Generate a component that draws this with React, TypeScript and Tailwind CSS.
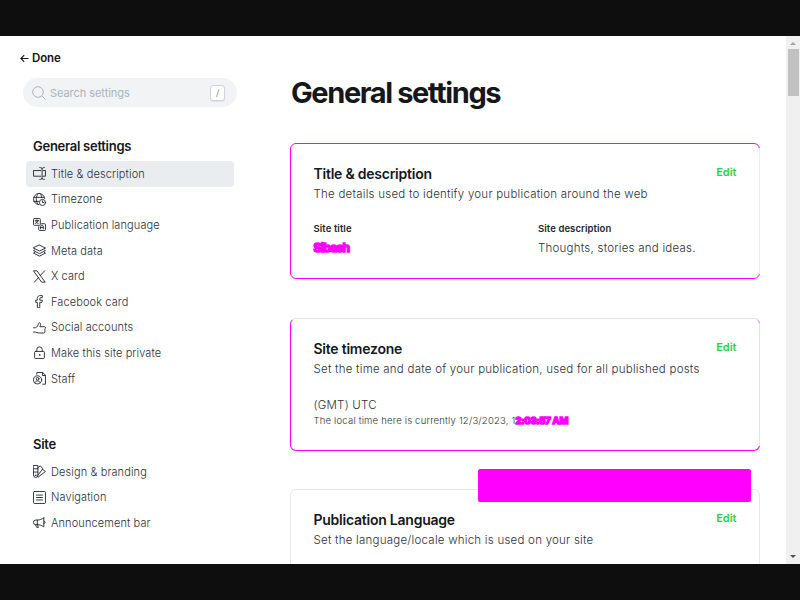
import type { ReactNode } from "react";

type IconName =
  | "title" | "timezone" | "language" | "layers" | "x" | "facebook"
  | "thumb" | "lock" | "staff" | "palette" | "nav" | "megaphone";

const drawings: Record<IconName, ReactNode> = {
  title: (
    <>
      <path d="M14.500 6.500H1v10.500h13.500M19 6.500h4v10.500h-4" />
      <path d="M16.800 3v18M12.500 1c2.500 0 4.300.8 4.300 2.500C16.800 1.800 18.500 1 21 1M12.500 23c2.500 0 4.300-.8 4.300-2.500 0 1.700 1.700 2.500 4.200 2.500" />
    </>
  ),
  timezone: (
    <>
      <path d="M11 21.500A10.300 10.300 0 1 1 21.500 10M1.500 8h19M1.500 15.500h9M9 21C4.500 14 5 6 10 1M13 1c2 2.500 3 5 3.300 8" />
      <circle cx="17.500" cy="17.500" r="5.700" />
      <path d="M17.500 14.500v3h2.500" />
    </>
  ),
  language: (
    <>
      <rect x="1" y="1" width="12.500" height="12.500" rx="1.500" />
      <path d="M16 10.500h5.500a1.500 1.500 0 0 1 1.500 1.500v9.500a1.500 1.500 0 0 1-1.500 1.500H12a1.500 1.500 0 0 1-1.500-1.500V16" />
      <path d="M4 5h6.500M7.200 3.500V5M9 5c-.5 2.500-2 4-4.500 5M5.500 6.500c.8 1.700 2 2.800 4 3.500M14 20v-4.500c0-3 5-3 5 0V20M14 17.500h5" />
    </>
  ),
  layers: (
    <path d="M12 2 23 7.500 12 13 1 7.500ZM3 11l-2 1.200 11 5.600 11-5.600-2-1.200M3 15.600l-2 1.200 11 5.600 11-5.600-2-1.200" />
  ),
  x: <path d="M1.500 1.500h5.800L22.500 22.500h-5.800ZM21.500 1.500l-8.300 9M10.600 13.500 2.500 22.500" />,
  facebook: (
    <path d="M12.500 23V13.500h4l.7-4h-4.700V7c0-1.500.7-2.200 2.300-2.200h2.400V1.200C9.500.2 8 3 8 6.500v3H5v4h3V23Z" />
  ),
  thumb: (
    <path d="M1 12.500h3.500C8 11 9.500 8.500 10 4.500c.8-2 4-1.500 4 1.500 0 2-.7 3-1.500 4.500H21c2.500 0 2.700 3 1 3.700v6c-.1 1.500-1 2-2.500 2H11c-3 0-4.500-1.700-6.500-1.700H1" />
  ),
  lock: (
    <>
      <rect x="3" y="10" width="18" height="13" rx="1.500" />
      <path d="M7 10V6.500a5 5 0 0 1 10 0V10" />
      <circle cx="12" cy="16.500" r=".7" />
    </>
  ),
  staff: (
    <>
      <circle cx="8.500" cy="14.500" r="7.500" />
      <circle cx="8.500" cy="12.500" r="2.500" />
      <path d="M3.500 20c1-5 9-5 10 0M7 4V1h11l5 5v16.500h-5M17.500 1v5.500H23" />
    </>
  ),
  palette: (
    <>
      <path d="M1 1h8v18a4 4 0 0 1-8 0ZM1 7h8M1 13h8M9 5l4.500-3.500L18 7 9 19M17.500 8l5.500 4-13.500 10.500" />
      <circle cx="5" cy="19" r=".6" />
    </>
  ),
  nav: (
    <>
      <rect x="1" y="1" width="22" height="22" rx="1.500" />
      <path d="M6.500 7.500h11M6.500 12h11M6.500 16.500h11" />
    </>
  ),
  megaphone: (
    <path d="M8 7.500v8.500M20 3.500v16.500C16 17.500 12.500 16 8 16H5a4.200 4.200 0 0 1 0-8.500h3c4.500 0 8-1.500 12-4ZM20 9.500c3.500 0 3.500 4.500 0 4.500M5 16c0 2 .7 3.500 2 5h3c-1-1.500-1.500-3-1.500-5" />
  ),
};

function Icon({ name }: { name: IconName }) {
  return (
    <svg viewBox="0 0 24 24" className="size-[13px] shrink-0" fill="none" stroke="#24282c" strokeWidth="1.7" strokeLinejoin="round" strokeLinecap="round">
      {drawings[name]}
    </svg>
  );
}

const general: { icon: IconName; label: string; active?: boolean }[] = [
  { icon: "title", label: "Title & description", active: true },
  { icon: "timezone", label: "Timezone" },
  { icon: "language", label: "Publication language" },
  { icon: "layers", label: "Meta data" },
  { icon: "x", label: "X card" },
  { icon: "facebook", label: "Facebook card" },
  { icon: "thumb", label: "Social accounts" },
  { icon: "lock", label: "Make this site private" },
  { icon: "staff", label: "Staff" },
];

const site: { icon: IconName; label: string; active?: boolean }[] = [
  { icon: "palette", label: "Design & branding" },
  { icon: "nav", label: "Navigation" },
  { icon: "megaphone", label: "Announcement bar" },
];

function Menu({ title, items }: { title: string; items: typeof general }) {
  return (
    <section>
      <h2 className="ml-[7px] pt-px text-[13px] leading-[19px] font-semibold tracking-[-0.27px]">{title}</h2>
      <ul className="mt-[5px]">
        {items.map((item) => (
          <li
            key={item.label}
            className={
              item.active
                ? "flex h-[25.6px] items-center gap-[5px] rounded-[4px] bg-[#e9edf0] pl-[7px]"
                : "flex h-[25.6px] items-center gap-[5px] pl-[7px]"
            }
          >
            <Icon name={item.icon} />
            <span className="text-[11px] leading-4 font-[350] tracking-[0.11px] whitespace-nowrap text-[#2b3138]">{item.label}</span>
          </li>
        ))}
      </ul>
    </section>
  );
}

function CardHead({ title, text }: { title: string; text: string }) {
  return (
    <>
      <div className="flex items-start justify-between">
        <h3 className="text-[14px] leading-5 font-semibold tracking-[-0.24px]">{title}</h3>
        <span className="text-[11px] leading-4 font-semibold text-[#30cf43]">Edit</span>
      </div>
      <p className="mt-px text-[11.5px] leading-[18px] font-[350] tracking-[0.235px] whitespace-nowrap text-[#2b3138]">{text}</p>
    </>
  );
}

export default function App() {
  return (
    <div className="flex h-[600px] w-[800px] flex-col overflow-hidden bg-[#0e0e0e] py-9 font-['Inter',sans-serif] text-[#15171a]">
      <div className="flex h-[528px] overflow-hidden bg-white">
        <aside className="w-[290px] shrink-0 pt-[14px] pl-5">
          <div className="flex h-4 items-center gap-[3px] text-[11.5px] font-semibold tracking-[-0.1px]">
            <svg viewBox="0 0 9 9" className="size-[9px]" fill="none" stroke="#15171a" strokeWidth="1.1">
              <path d="M8.500 4.500H1M4.200 1.200.9 4.500l3.300 3.300" />
            </svg>
            <span className="pt-px">Done</span>
          </div>
          <div className="mt-[12px] ml-[3px] flex h-[29px] w-[214px] items-center rounded-full bg-[#f1f3f4] pr-3 pl-[9px]">
            <svg viewBox="0 0 14 14" className="size-[14px]" fill="none" stroke="#abb4be" strokeWidth="1">
              <circle cx="6" cy="6" r="5.300" />
              <path d="m10 10 3.500 3.500" />
            </svg>
            <span className="ml-1 flex-1 pt-px text-[11px] tracking-[-0.05px] text-[#abb4be]">Search settings</span>
            <span className="flex h-4 w-[15px] items-center justify-center rounded-[3px] border border-[#ced4d9] bg-white text-[9px] text-[#7c8b9a] shadow-[0_1px_0_#e0e4e8]">/</span>
          </div>
          <div className="mt-[29px] ml-[6px] flex w-[208px] flex-col gap-[42.500px]">
            <Menu title="General settings" items={general} />
            <Menu title="Site" items={site} />
          </div>
        </aside>

        <main className="w-[470px] shrink-0 pt-[39px]">
          <h1 className="ml-px text-[29px] leading-9 font-bold tracking-[-1.4px] whitespace-nowrap">General settings</h1>

          <section className="relative mt-[32px] h-[136px] rounded-[6px] border border-[#ff00ff] px-[22.500px] pt-5 after:absolute after:top-[4px] after:right-[-1px] after:bottom-[4px] after:w-px after:bg-[#eceef0]">
            <CardHead title="Title & description" text="The details used to identify your publication around the web" />
            <div className="mt-[18px] grid grid-cols-2 gap-x-[26px]">
              <div>
                <h4 className="text-[9.500px] leading-4 font-semibold tracking-[0.09px] text-[#22262a]">Site title</h4>
                <p className="mt-[2px] text-[12px] leading-[18px] font-bold tracking-[-0.7px] text-[#ff00ff] [-webkit-text-stroke:1.5px_#ff00ff]">Sibash</p>
              </div>
              <div>
                <h4 className="text-[9.500px] leading-4 font-semibold tracking-[0.09px] text-[#22262a]">Site description</h4>
                <p className="mt-[2px] text-[11.5px] leading-[18px] font-[350] tracking-[0.235px] whitespace-nowrap text-[#2b3138]">Thoughts, stories and ideas.</p>
              </div>
            </div>
          </section>

          <section className="relative mt-[39px] h-[133px] rounded-[6px] border border-[#ff00ff] border-t-[#dfe3e7] px-[22.500px] pt-5 after:absolute after:top-[-1px] after:right-[-1px] after:bottom-[4px] after:w-[6px] after:rounded-tr-[6px] after:border-t after:border-r after:border-[#dfe3e7]">
            <CardHead title="Site timezone" text="Set the time and date of your publication, used for all published posts" />
            <p className="mt-[18px] text-[11.5px] leading-[18px] font-[350] tracking-[0.235px] text-[#2b3138]">(GMT) UTC</p>
            <p className="flex text-[9.500px] leading-[14px] font-[350] whitespace-nowrap text-[#2b3138]">
              <span className="tracking-[0.200px]">The local time here is currently 12/3/2023, 1</span>
              <span className="font-bold tracking-[-0.200px] text-[#ff00ff] [-webkit-text-stroke:1.6px_#ff00ff]">2:03:57 AM</span>
            </p>
          </section>

          <section className="relative mt-[38px] h-[133px] rounded-[6px] border border-[#e6e9eb] px-[22.500px] pt-5">
            <CardHead title="Publication Language" text="Set the language/locale which is used on your site" />
            <div className="absolute top-[-21px] left-[187px] h-[33px] w-[273px] rounded-[2px] bg-[#ff00ff]" />
          </section>
        </main>

        <div className="ml-auto flex w-[14px] flex-col items-center bg-[#f0f0f0]">
          <svg viewBox="0 0 14 13" className="h-[13px] w-[14px]" fill="#a3a3a3">
            <path d="M4 9h6L7 6Z" />
          </svg>
          <div className="ml-px h-[47px] w-[11px] bg-[#c1c1c1]" />
          <svg viewBox="0 0 14 13" className="mt-auto h-[13px] w-[14px]" fill="#505050">
            <path d="M4 4h6L7 7Z" />
          </svg>
        </div>
      </div>
    </div>
  );
}
